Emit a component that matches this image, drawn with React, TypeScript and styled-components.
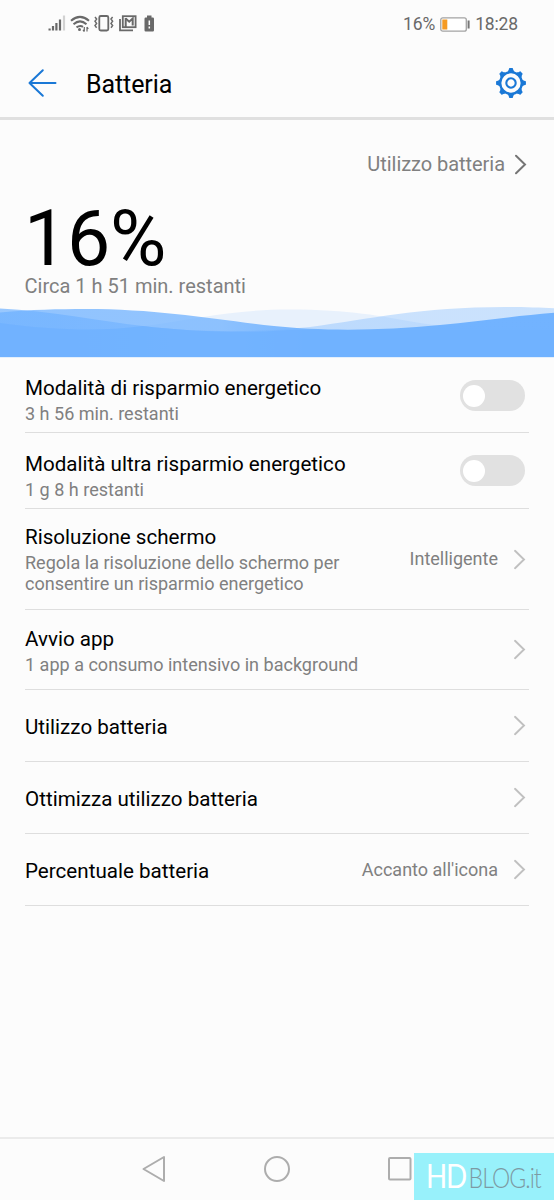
import React from "react";
import styled, { createGlobalStyle } from "styled-components";

const GlobalStyle = createGlobalStyle`
  * { box-sizing: border-box; }
  body { margin: 0; background: #fcfcfc; font-family: Roboto, sans-serif; color: #000; }
`;

const Screen = styled.div`
  width: 554px;
  height: 1200px;
  display: flex;
  flex-direction: column;
  overflow: hidden;
  background: #fcfcfc;
`;

const StatusBar = styled.div`
  height: 48px;
  padding: 0 36px 0 48px;
  display: flex;
  align-items: center;
  justify-content: space-between;
  color: #696969;
  font-size: 17.5px;
  line-height: 24px;
  letter-spacing: -0.15px;
`;

const StatusGroup = styled.div`
  display: flex;
  align-items: center;
  gap: 5px;
`;

const Icon = styled.svg`
  display: block;
  flex: none;
  overflow: visible;
`;

const Header = styled.header`
  height: 72px;
  padding: 0 27px 0 28px;
  display: flex;
  align-items: center;
  border-bottom: 3px solid #e0e0e0;
`;

const Title = styled.h1`
  flex: 1;
  margin: 4px 0 0 30px;
  font-size: 25px;
  line-height: 30px;
  font-weight: 400;
  letter-spacing: -0.1px;
`;

const Hero = styled.section`
  height: 238px;
  display: flex;
  flex-direction: column;
`;

const UsageLink = styled.div`
  margin-top: 31px;
  height: 26px;
  padding-right: 28px;
  display: flex;
  justify-content: flex-end;
  align-items: center;
  gap: 10px;
  color: #808080;
  font-size: 20px;
  line-height: 26px;
  letter-spacing: -0.05px;
`;

const Percent = styled.div`
  margin: 23px 0 0 24px;
  height: 74px;
  font-size: 77px;
  line-height: 74px;
  padding-top: 2px;
  letter-spacing: -0.3px;
`;

const Remaining = styled.div`
  margin: 0 0 0 24.5px;
  font-size: 20px;
  line-height: 24px;
  color: #808080;
`;

const Wave = styled.svg`
  display: block;
  width: 554px;
  height: 52px;
  margin-top: auto;
`;

const List = styled.main`
  flex: 1;
  padding: 0 25px;
`;

const Row = styled.div<{ $h: number }>`
  height: ${(p) => p.$h}px;
  display: flex;
  align-items: center;
  border-bottom: 1px solid #dedede;
`;

const Labels = styled.div<{ $shift?: number }>`
  flex: 1;
  padding-top: ${(p) => p.$shift ?? 3}px;
`;

const Label = styled.div`
  font-size: 20.6px;
  line-height: 26px;
  white-space: nowrap;
`;

const Sub = styled.div<{ $gap?: number }>`
  margin-top: ${(p) => p.$gap ?? 2}px;
  font-size: 18.05px;
  line-height: 21px;
  color: #808080;
  white-space: pre-line;
`;

const Value = styled.span`
  margin-right: 16px;
  font-size: 18px;
  line-height: 22px;
  color: #808080;
`;

const ChevronSlot = styled.span`
  margin-right: 4px;
`;

const Toggle = styled.span`
  width: 65px;
  height: 31px;
  padding: 5px 3px;
  margin-right: 4px;
  border-radius: 16px;
  background: #e1e1e1;
`;

const Knob = styled.span`
  display: block;
  width: 22px;
  height: 22px;
  border-radius: 50%;
  background: #fff;
`;

const NavBar = styled.nav`
  position: relative;
  height: 63px;
  padding: 0 142px 2px;
  display: flex;
  align-items: center;
  justify-content: space-between;
  border-top: 2px solid #ebebeb;
`;

const Watermark = styled.div`
  position: absolute;
  right: 0;
  bottom: 0;
  width: 140px;
  height: 47px;
  padding: 0 0 0 11.5px;
  background: #98f1fb;
  font-family: Lato, sans-serif;
  line-height: 46px;
  white-space: nowrap;
`;

const Wordmark = styled.div`
  display: inline-flex;
  align-items: baseline;
  transform: scaleX(0.87);
  transform-origin: left center;
`;

const Hd = styled.span`
  font-size: 32px;
  font-weight: 400;
  color: #fff;
  letter-spacing: -1.4px;
`;

const Blog = styled.span`
  margin-left: 3px;
  font-size: 26.5px;
  font-weight: 300;
  color: #7d9aa3;
  letter-spacing: -1.1px;
`;

const Chevron = ({ color = "#c0c0c0", width = 1.9 }: { color?: string; width?: number }) => (
  <Icon width="11" height="19" viewBox="0 0 11 19" fill="none" stroke={color} strokeWidth={width} strokeLinecap="round">
    <path d="M1 .8 10 9.5 1 18.2" />
  </Icon>
);

const StatusIcons = () => (
  <Icon width="108" height="20" viewBox="48 14 108 20" fill="none" stroke="#696969">
    <g strokeWidth="2.2">
      <path d="M49.6 30.500v-2M53 30.500v-4.500M56.400 30.500v-7.500M60 30.500v-11" />
      <path d="M64 30.500v-15" stroke="#d2d2d2" />
    </g>
    <g strokeWidth="2">
      <path d="M71 20.700Q80 13 89 20.700M73.500 24.200Q80 18.500 86.500 24.200M76.500 27.400Q80 24.800 83 26.800" />
    </g>
    <circle cx="79.500" cy="29.500" r="1.500" fill="#696969" stroke="none" />
    <path d="M84.300 27v4.500M83 29.800l1.300 1.800M87 31.500V27M88.300 28.800 87 27" strokeWidth="1.200" />
    <rect x="99.300" y="16" width="9" height="14.500" rx="1.500" strokeWidth="1.800" />
    <path d="M95 17l1.600 2-1.600 2.200 1.600 2.200-1.600 2.200 1.600 2.200M112.600 17l-1.600 2 1.600 2.200-1.600 2.200 1.600 2.200-1.600 2.200" strokeWidth="1.500" />
    <path d="M120 19v11.300h13" strokeWidth="1.800" />
    <rect x="122.800" y="16.200" width="12.800" height="11" strokeWidth="1.800" />
    <path d="M125.700 18.500l3.500 3.200 3.500-3.200v7" strokeWidth="2" />
    <path d="M125.700 18v9" strokeWidth="2" />
    <path d="M147 15.500h4.500v2h1.300q1.200 0 1.200 1.200v11.600q0 1.200-1.200 1.200h-7.100q-1.200 0-1.200-1.200V18.700q0-1.200 1.200-1.200H147z" fill="#696969" stroke="none" />
    <path d="M149.300 20.500v4.500M149.300 26.500v2" stroke="#fff" strokeWidth="1.500" />
  </Icon>
);

const BatteryLevel = () => (
  <Icon width="30" height="15" viewBox="0 0 30 15">
    <rect x=".8" y=".8" width="25.500" height="13.400" rx="2" fill="#fff" stroke="#a3a3a3" strokeWidth="1.300" />
    <rect x="2.300" y="2.500" width="5" height="10" fill="#f59a23" />
    <path d="M28.600 3.500v8" stroke="#777" strokeWidth="2" />
  </Icon>
);

const Gear = () => (
  <Icon width="32" height="32" viewBox="-16 -16 32 32" fill="none" stroke="#1a78d6">
    <circle r="10.800" strokeWidth="2.300" />
    <circle r="4.700" strokeWidth="2.100" />
    {[0, 45, 90, 135, 180, 225, 270, 315].map((a) => (
      <path key={a} d="M-2.600-11.500Q-1.500-12.300-1.300-14.200H1.300Q1.500-12.300 2.600-11.500z" transform={`rotate(${a})`} fill="#1a78d6" strokeWidth="1.400" strokeLinejoin="round" />
    ))}
  </Icon>
);

const Waves = () => (
  <Wave viewBox="0 306 554 52">
    <defs>
      <linearGradient id="mid" x1="0" x2="554" gradientUnits="userSpaceOnUse">
        <stop offset="0.1" stopColor="#6eb1ff" stopOpacity=".7" />
        <stop offset=".55" stopColor="#6eb1ff" stopOpacity=".35" />
      </linearGradient>
      <linearGradient id="front" x1="0" x2="554" gradientUnits="userSpaceOnUse">
        <stop offset="0.400" stopColor="#70b2ff" stopOpacity=".76" />
        <stop offset=".6" stopColor="#70b2ff" stopOpacity=".98" />
      </linearGradient>
    </defs>
    <path fill="#6eb1ff" fillOpacity=".14" d="M0 323C50 330 100 332 145 326C195 319 235 309.500 290 309.500C350 309.500 380 316 420 323C460 330 520 330 554 328V358H0z" />
    <path fill="url(#mid)" d="M0 308.500C50 311 100 321 143 326C195 332.500 255 333 310 327C370 319 420 307 505 307C525 307 540 307.500 554 308.300V358H0z" />
    <path fill="url(#front)" d="M0 312.500C30 309.500 60 309 85 309C160 309 210 319 274 326C320 331 380 331 440 325C480 321 515 316 554 312.800V358H0z" />
    <path d="M0 323C50 330 100 332 143 326C195 332.500 255 333 290 330H554V357H0z" fill="#70b2ff" fillOpacity=".85" />
    <rect y="357" width="554" height="1" fill="#e3effc" />
  </Wave>
);

export default function App() {
  return (
    <Screen>
      <GlobalStyle />
      <StatusBar>
        <StatusIcons />
        <StatusGroup>
          <span>16%</span>
          <BatteryLevel />
          <span>18:28</span>
        </StatusGroup>
      </StatusBar>
      <Header>
        <Icon width="28" height="28" viewBox="0 0 28 28" fill="none" stroke="#1a78d6" strokeWidth="2" strokeLinecap="round" strokeLinejoin="round">
          <path d="M14.800 1.200 1.500 14l13.300 12.800M1.500 14h26" />
        </Icon>
        <Title>Batteria</Title>
        <Gear />
      </Header>
      <Hero>
        <UsageLink>
          Utilizzo batteria
          <Chevron color="#757575" width={2} />
        </UsageLink>
        <Percent>16%</Percent>
        <Remaining>Circa 1 h 51 min. restanti</Remaining>
        <Waves />
      </Hero>
      <List>
        <Row $h={75}>
          <Labels $shift={8}>
            <Label>Modalità di risparmio energetico</Label>
            <Sub>3 h 56 min. restanti</Sub>
          </Labels>
          <Toggle><Knob /></Toggle>
        </Row>
        <Row $h={76}>
          <Labels $shift={10}>
            <Label>Modalità ultra risparmio energetico</Label>
            <Sub>1 g 8 h restanti</Sub>
          </Labels>
          <Toggle><Knob /></Toggle>
        </Row>
        <Row $h={101}>
          <Labels $shift={0}>
            <Label>Risoluzione schermo</Label>
            <Sub>{"Regola la risoluzione dello schermo per\nconsentire un risparmio energetico"}</Sub>
          </Labels>
          <Value>Intelligente</Value>
          <ChevronSlot><Chevron /></ChevronSlot>
        </Row>
        <Row $h={80}>
          <Labels $shift={1}>
            <Label>Avvio app</Label>
            <Sub>1 app a consumo intensivo in background</Sub>
          </Labels>
          <ChevronSlot><Chevron /></ChevronSlot>
        </Row>
        <Row $h={72}>
          <Labels>
            <Label>Utilizzo batteria</Label>
          </Labels>
          <ChevronSlot><Chevron /></ChevronSlot>
        </Row>
        <Row $h={72}>
          <Labels>
            <Label>Ottimizza utilizzo batteria</Label>
          </Labels>
          <ChevronSlot><Chevron /></ChevronSlot>
        </Row>
        <Row $h={72}>
          <Labels>
            <Label>Percentuale batteria</Label>
          </Labels>
          <Value>Accanto all'icona</Value>
          <ChevronSlot><Chevron /></ChevronSlot>
        </Row>
      </List>
      <NavBar>
        <Icon width="24" height="26" viewBox="0 0 24 26" fill="none" stroke="#adadad" strokeWidth="2" strokeLinejoin="round">
          <path d="M22 1v24L1.500 13z" />
        </Icon>
        <Icon width="26" height="26" viewBox="0 0 26 26" fill="none" stroke="#adadad" strokeWidth="2">
          <circle cx="13" cy="13" r="12" />
        </Icon>
        <Icon width="24" height="24" viewBox="0 0 24 24" fill="none" stroke="#adadad" strokeWidth="2">
          <rect x="1" y="1" width="21.500" height="21.500" rx="1" />
        </Icon>
        <Watermark>
          <Wordmark>
            <Hd>HD</Hd>
            <Blog>BLOG.it</Blog>
          </Wordmark>
        </Watermark>
      </NavBar>
    </Screen>
  );
}
